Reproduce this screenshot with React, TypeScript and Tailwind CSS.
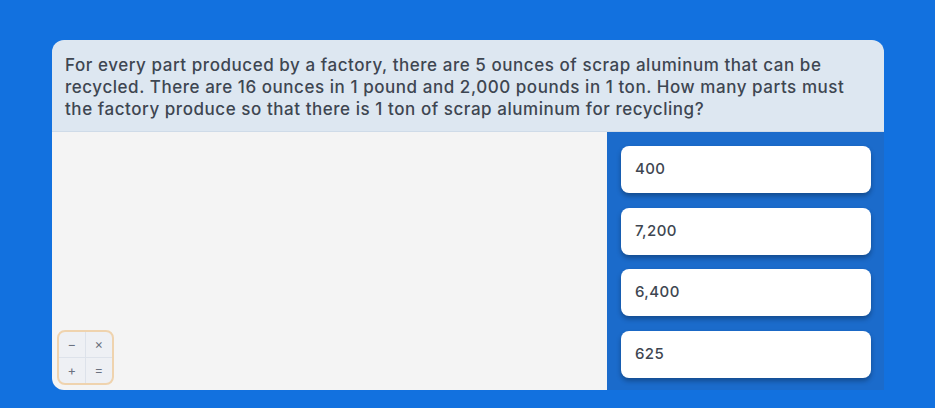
import React from 'react';

const answers = ['400', '7,200', '6,400', '625'];

export default function App() {
  return (
    <div
      className="w-[935px] h-[408px] bg-[#1271DF] pt-[40px] pl-[52px] overflow-hidden"
      style={{ fontFamily: 'Inter, "Open Sans", sans-serif' }}
    >
      <div className="w-[832px] flex flex-col">
        {/* Question */}
        <div className="h-[92px] bg-[#DDE7F1] rounded-t-[12px] pl-[13px] pr-[20px] pt-[14px] border-b border-[#CFDBE8]">
          <p className="text-[17px] leading-[22px] font-medium text-[#3E4651] tracking-[0.55px] whitespace-nowrap">
            For every part produced by a factory, there are 5 ounces of scrap aluminum that can be
            <br />
            recycled. There are 16 ounces in 1 pound and 2,000 pounds in 1 ton. How many parts must
            <br />
            the factory produce so that there is 1 ton of scrap aluminum for recycling?
          </p>
        </div>

        <div className="flex h-[258px]">
          {/* Scratch area */}
          <div className="w-[555px] bg-[#F4F4F4] rounded-bl-[12px] flex flex-col justify-end pl-[5px] pb-[5px]">
            <div className="w-[57px] h-[55px] rounded-[8px] border-2 border-[#EFD3AE] bg-[#EEF0F4] grid grid-cols-2 grid-rows-2 overflow-hidden text-[#6B7280] text-[13px]">
              <div className="flex items-center justify-center border-r border-b border-[#DDE2EA]">−</div>
              <div className="flex items-center justify-center border-b border-[#DDE2EA]">×</div>
              <div className="flex items-center justify-center border-r border-[#DDE2EA]">+</div>
              <div className="flex items-center justify-center">=</div>
            </div>
          </div>

          {/* Answers */}
          <div className="flex-1 bg-[#1B6BCB] pl-[14px] pr-[13px] pt-[14px] flex flex-col gap-[14.5px]">
            {answers.map((a) => (
              <div
                key={a}
                className="h-[47px] bg-white rounded-[8px] shadow-[0_3px_5px_rgba(0,0,0,0.3)] flex items-center pl-[14px] text-[15px] font-medium tracking-[0.4px] text-[#3E4651]"
              >
                {a}
              </div>
            ))}
          </div>
        </div>
      </div>
    </div>
  );
}
